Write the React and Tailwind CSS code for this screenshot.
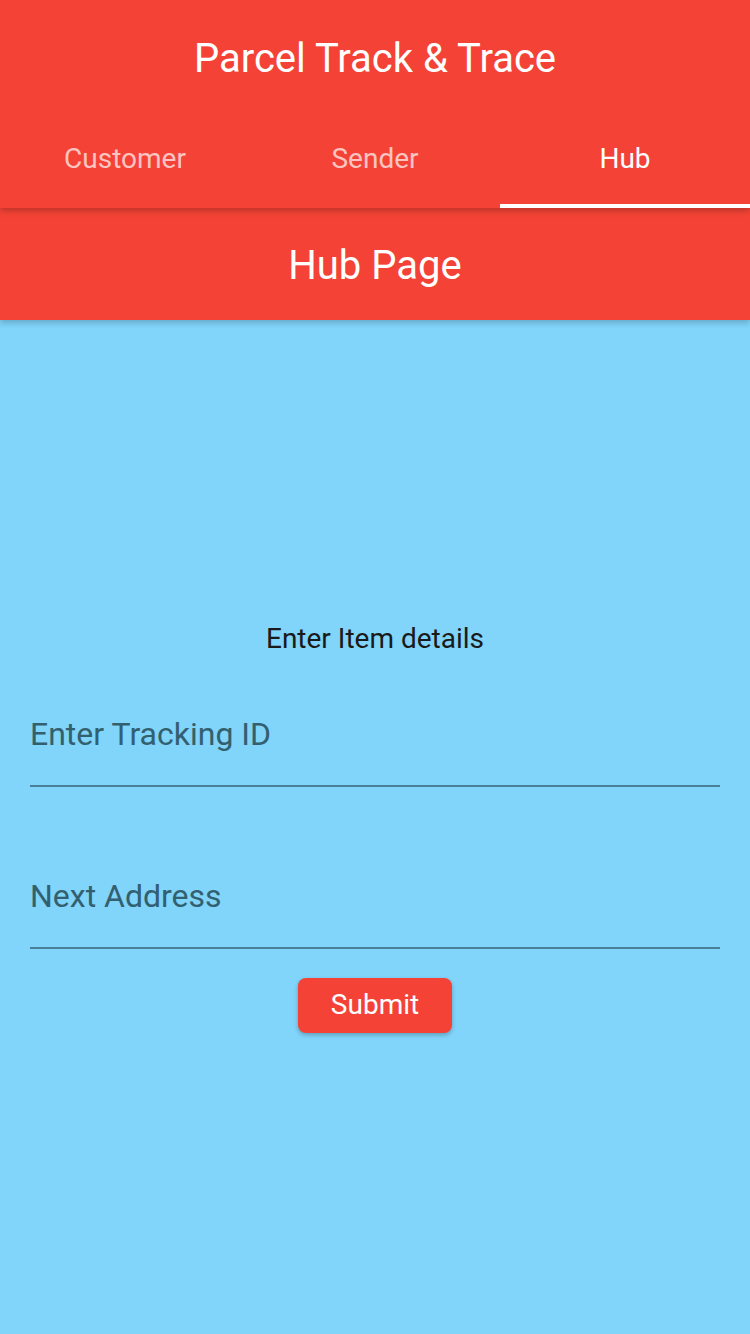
import { useState } from "react";

export default function App() {
  const [tab, setTab] = useState("hub");
  const tabs = [
    { key: "customer", name: "Customer" },
    { key: "sender", name: "Sender" },
    { key: "hub", name: "Hub" },
  ];

  return (
    <div
      className="w-[750px] h-[1334px] flex flex-col bg-[#81d4fa] overflow-hidden"
      style={{ fontFamily: "Roboto, 'Noto Sans', sans-serif" }}
    >
      {/* App bar with tabs */}
      <header className="relative z-20 bg-[#f44336] shadow-[0_3px_6px_rgba(0,0,0,0.22)]">
        <div className="h-[112px] pt-[6px] flex items-center justify-center">
          <h1 className="text-[40px] leading-none text-white">Parcel Track &amp; Trace</h1>
        </div>
        <nav className="h-[96px] flex">
          {tabs.map((t) => {
            const active = tab === t.key;
            return (
              <button
                key={t.key}
                type="button"
                onClick={() => setTab(t.key)}
                className={`flex-1 flex items-center justify-center text-[28px] leading-none pt-[2px] border-b-4 ${
                  active ? "text-white border-white" : "text-white/70 border-transparent"
                }`}
              >
                {t.name}
              </button>
            );
          })}
        </nav>
      </header>

      {/* Page title */}
      <div className="relative z-10 h-[112px] pt-[4px] bg-[#f44336] flex items-center justify-center shadow-[0_3px_6px_rgba(0,0,0,0.2)]">
        <h2 className="text-[40px] leading-none text-white">Hub Page</h2>
      </div>

      {/* Form */}
      <main className="flex-1 flex flex-col items-center justify-center px-[30px]">
        <p className="text-[28px] leading-[34px] text-[#1a1a1a]">Enter Item details</p>
        <div className="w-full mt-[17px] h-[114px] flex flex-col justify-end">
          <div className="text-[32px] leading-none text-[#33606f] pb-[35px]">Enter Tracking ID</div>
          <div className="h-[2px] bg-[#4a7f99]" />
        </div>
        <div className="w-full h-[162px] flex flex-col justify-end">
          <div className="text-[32px] leading-none text-[#33606f] pb-[35px]">Next Address</div>
          <div className="h-[2px] bg-[#4a7f99]" />
        </div>
        <button
          type="button"
          className="mt-[29px] w-[154px] h-[55px] rounded-[8px] bg-[#f44336] text-white text-[28px] leading-none shadow-[0_2px_4px_rgba(0,0,0,0.25)]"
        >
          Submit
        </button>
      </main>
    </div>
  );
}
